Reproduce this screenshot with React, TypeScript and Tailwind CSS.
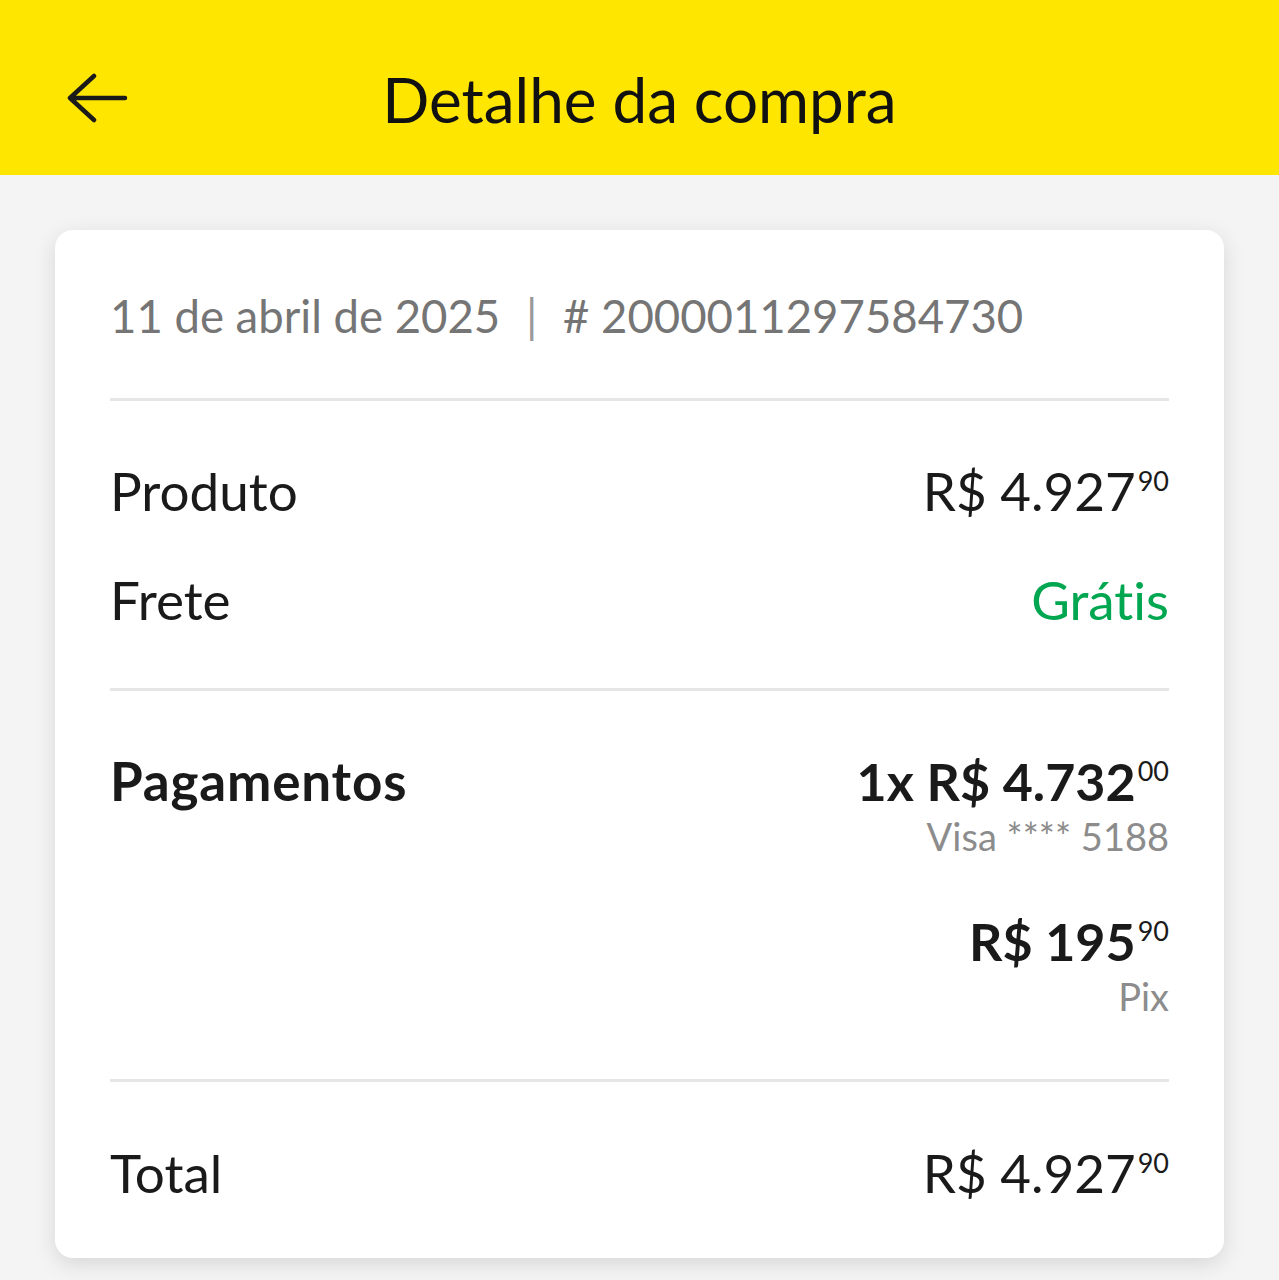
const font = { fontFamily: "Lato, 'Noto Sans', sans-serif" };

function Cents({ v }: { v: string }) {
  return <span className="relative -top-[20px] ml-[2px] text-[27px] font-normal leading-none">{v}</span>;
}

function Divider() {
  return <div className="h-[3px] bg-[#e6e6e6]" />;
}

export default function App() {
  return (
    <div style={font} className="min-h-[1280px] bg-[#f4f4f4] text-[#1a1a1a] [font-variant-ligatures:none]">
      <header className="relative flex h-[175px] items-center justify-center bg-[#ffe600]">
        <svg
          className="absolute left-[66px] top-[73px]"
          width="62"
          height="54"
          viewBox="0 0 62 54"
          fill="none"
          stroke="#1a1a1a"
          strokeWidth="4.5"
          strokeLinecap="round"
          strokeLinejoin="round"
        >
          <path d="M4 25h55M28 3L4 25l24 22" />
        </svg>
        <h1 className="mt-[22px] text-[62px] leading-none text-[#111]">Detalhe da compra</h1>
      </header>

      <main className="px-[55px] pt-[55px] pb-[20px]">
        <div className="rounded-[18px] bg-white px-[55px] shadow-[0_6px_22px_rgba(0,0,0,0.12)]">
          <div className="pt-[59px] pb-[55px] text-[45.5px] leading-[54px] text-[#757575]">
            11 de abril de 2025 <span className="mx-[14px] text-[#9a9a9a]">|</span> # 2000011297584730
          </div>
          <Divider />

          <div className="flex flex-col gap-[55px] pt-[63px] pb-[61px] text-[53px] leading-[54px]">
            <div className="flex items-center justify-between">
              <span>Produto</span>
              <span>
                R$ 4.927<Cents v="90" />
              </span>
            </div>
            <div className="flex items-center justify-between">
              <span>Frete</span>
              <span className="text-[#00a650]">Grátis</span>
            </div>
          </div>
          <Divider />

          <div className="flex justify-between pt-[63px] pb-[55px]">
            <span className="text-[53px] font-bold leading-[54px] tracking-[0.8px]">Pagamentos</span>
            <div className="flex flex-col items-end">
              <span className="text-[52px] font-bold leading-[54px]">
                1x R$ 4.732<Cents v="00" />
              </span>
              <span className="text-[38px] leading-[56px] text-[#8c8c8c]">Visa **** 5188</span>
              <span className="mt-[50px] text-[52px] font-bold leading-[54px]">
                R$ 195<Cents v="90" />
              </span>
              <span className="text-[38px] leading-[56px] text-[#8c8c8c]">Pix</span>
            </div>
          </div>
          <Divider />

          <div className="flex items-center justify-between pt-[64px] pb-[58px] text-[53px] leading-[54px]">
            <span>Total</span>
            <span>
              R$ 4.927<Cents v="90" />
            </span>
          </div>
        </div>
      </main>
    </div>
  );
}
